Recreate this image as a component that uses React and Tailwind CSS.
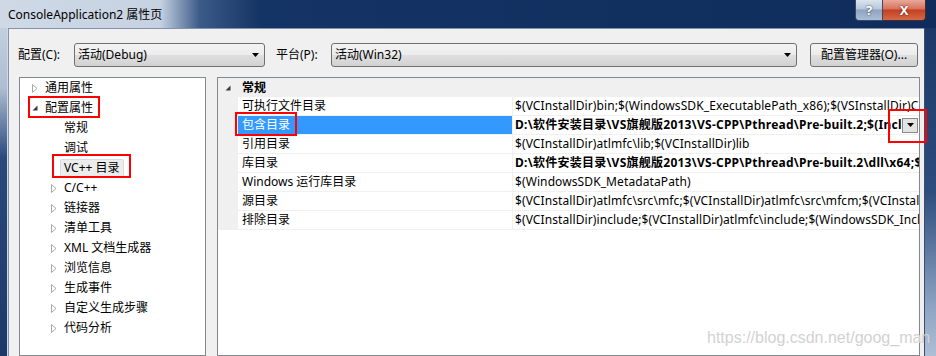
import React from "react";

const tree = [
  { label: "通用属性", level: 0, icon: "closed" },
  { label: "配置属性", level: 0, icon: "open" },
  { label: "常规", level: 1, icon: null },
  { label: "调试", level: 1, icon: null },
  { label: "VC++ 目录", level: 1, icon: null, selected: true },
  { label: "C/C++", level: 1, icon: "closed" },
  { label: "链接器", level: 1, icon: "closed" },
  { label: "清单工具", level: 1, icon: "closed" },
  { label: "XML 文档生成器", level: 1, icon: "closed" },
  { label: "浏览信息", level: 1, icon: "closed" },
  { label: "生成事件", level: 1, icon: "closed" },
  { label: "自定义生成步骤", level: 1, icon: "closed" },
  { label: "代码分析", level: 1, icon: "closed" },
];

const rows = [
  { name: "可执行文件目录", value: "$(VCInstallDir)bin;$(WindowsSDK_ExecutablePath_x86);$(VSInstallDir)Common7\\Tools\\bin;$(VSInstallDir)Common7\\tools" },
  { name: "包含目录", value: "D:\\软件安装目录\\VS旗舰版2013\\VS-CPP\\Pthread\\Pre-built.2;$(IncludePath)", bold: true, selected: true },
  { name: "引用目录", value: "$(VCInstallDir)atlmfc\\lib;$(VCInstallDir)lib" },
  { name: "库目录", value: "D:\\软件安装目录\\VS旗舰版2013\\VS-CPP\\Pthread\\Pre-built.2\\dll\\x64;$(LibraryPath)", bold: true },
  { name: "Windows 运行库目录", value: "$(WindowsSDK_MetadataPath)" },
  { name: "源目录", value: "$(VCInstallDir)atlmfc\\src\\mfc;$(VCInstallDir)atlmfc\\src\\mfcm;$(VCInstallDir)atlmfc\\src\\atl;$(VCInstallDir)crt\\src" },
  { name: "排除目录", value: "$(VCInstallDir)include;$(VCInstallDir)atlmfc\\include;$(WindowsSDK_IncludePath);$(MSBuildToolsPath32)" },
];

function Closed() {
  return (
    <svg width="6" height="9" viewBox="0 0 6 9">
      <path d="M0.5 0.5 L5 4.5 L0.5 8.5 Z" fill="none" stroke="#a8a8a8" strokeWidth="1" />
    </svg>
  );
}

function Open() {
  return (
    <svg width="6" height="6" viewBox="0 0 6 6">
      <path d="M5.5 0.5 L5.5 5.5 L0.5 5.5 Z" fill="#3a3a3a" />
    </svg>
  );
}

function Arrow() {
  return (
    <svg width="7" height="4" viewBox="0 0 7 4">
      <path d="M0 0H7L3.5 4Z" fill="#000" />
    </svg>
  );
}

function Combo({ text, className }) {
  return (
    <div className={"flex h-[24px] items-center justify-between rounded-[3px] border border-[#707070] bg-[linear-gradient(to_bottom,#f3f3f3_0%,#ececec_50%,#dfdfdf_50%,#d2d2d2_100%)] pl-[3px] pr-[5px] " + className}>
      <span className="leading-[16px]">{text}</span>
      <Arrow />
    </div>
  );
}

export default function App() {
  return (
    <div className="relative flex h-[356px] w-[936px] flex-col overflow-hidden bg-[#1b3868] text-[12px] text-black font-['Noto_Sans','Noto_Sans_CJK_SC',sans-serif]">
      {/* title bar */}
      <div className="flex h-[28px] shrink-0 items-start bg-[linear-gradient(to_right,#cfd9e6_0px,#c6d2e2_160px,#3b5a88_200px,#143465_260px,#0f2c5c_100%)]">
        <div className="pl-[8px] pt-[6px] leading-[17px] text-[#000]">ConsoleApplication2 属性页</div>
        <div className="ml-auto mr-[10px] flex h-[21px]">
          <div className="flex w-[28px] items-center justify-center rounded-bl-[4px] border border-t-0 border-[#3a4a63] bg-[linear-gradient(to_bottom,#dbe4ef_0%,#b7c7db_45%,#8ea3bf_50%,#a9bed6_100%)] text-[13px] font-bold leading-none text-white [text-shadow:0_0_2px_#223]">
            ?
          </div>
          <div className="flex w-[43px] items-center justify-center rounded-br-[4px] border border-l-0 border-t-0 border-[#4a2a2a] bg-[linear-gradient(to_bottom,#e9a99a_0%,#d8705b_45%,#c3401f_50%,#d46a48_100%)] text-[13px] font-bold leading-none text-white [text-shadow:0_0_2px_#400]">
            X
          </div>
        </div>
      </div>

      {/* body */}
      <div className="flex min-h-0 flex-1">
        <div className="w-[8px] shrink-0 bg-[linear-gradient(to_bottom,#c3cfde_0px,#aebdd2_60px,#2a4a7c_130px,#1b3868_100%)] border-r border-[#cfd8e4]" />
        <div className="flex min-w-0 flex-1 flex-col border-l border-t border-[#8393ab] bg-[#f0f0f0] pl-[9px] pt-[14px]">
          {/* config row */}
          <div className="flex h-[24px] items-center">
            <div className="w-[56px] leading-[16px]">配置(C):</div>
            <Combo text="活动(Debug)" className="w-[191px]" />
            <div className="ml-[11px] w-[55px] leading-[16px]">平台(P):</div>
            <Combo text="活动(Win32)" className="w-[466px]" />
            <div className="ml-[13px] flex h-[24px] w-[108px] items-center justify-center rounded-[3px] border border-[#707070] bg-[linear-gradient(to_bottom,#f3f3f3_0%,#ececec_50%,#dfdfdf_50%,#d2d2d2_100%)] leading-[16px]">
              配置管理器(O)...
            </div>
          </div>

          {/* panels */}
          <div className="mt-[10px] ml-[1px] flex h-[300px] gap-[11px]">
            {/* tree */}
            <div className="w-[187px] shrink-0 border border-[#828790] bg-white">
              {tree.map((t, i) => (
                <div key={i} className={"flex h-[20px] items-center " + (t.level === 0 ? "pl-[12px]" : "pl-[31px]")}>
                  <div className="flex w-[13px] items-center">
                    {t.icon === "closed" && <Closed />}
                    {t.icon === "open" && <Open />}
                  </div>
                  {t.selected ? (
                    <span className="-ml-[4px] flex h-[19px] items-center rounded-[2px] border border-[#dadada] bg-[#ececec] px-[3px] leading-[16px]">{t.label}</span>
                  ) : (
                    <span className="leading-[16px]">{t.label}</span>
                  )}
                </div>
              ))}
            </div>

            {/* grid */}
            <div className="flex w-[703px] shrink-0 flex-col border border-[#828790] bg-white">
              <div className="flex h-[19px] items-center bg-[#f0f0f0]">
                <div className="flex w-[20px] items-center pl-[7px]">
                  <Open />
                </div>
                <div className="pl-[4px] font-bold leading-[16px]">常规</div>
              </div>
              {rows.map((r, i) => (
                <div key={i} className="flex h-[19px]">
                  <div className="w-[20px] shrink-0 bg-[#f0f0f0]" />
                  <div className={"flex w-[275px] shrink-0 items-center border-b border-r border-[#f0f0f0] pl-[4px] leading-[16px] " + (r.selected ? "bg-[#3399ff] text-white" : "")}>
                    {r.name}
                  </div>
                  <div className="flex min-w-0 flex-1 items-center border-b border-[#f0f0f0] pl-[2px]">
                    <div className={"min-w-0 flex-1 overflow-hidden whitespace-nowrap leading-[16px] " + (r.bold ? "font-bold tracking-[0.25px]" : "tracking-[0.1px]")}>{r.value}</div>
                    {r.selected && (
                      <div className="mr-[1px] flex h-[15px] w-[16px] shrink-0 items-center justify-center border border-[#8a8a8a] bg-[#e3e3e3]">
                        <Arrow />
                      </div>
                    )}
                  </div>
                </div>
              ))}
            </div>
          </div>
        </div>
        <div className="w-[12px] shrink-0 border-l border-[#3a4f70] bg-[linear-gradient(to_bottom,#1b3868_0%,#2d4d7e_50%,#8ea4c2_85%,#aebfd5_100%)]" />
      </div>

      {/* annotation boxes */}
      <div className="pointer-events-none absolute left-[28px] top-[96px] h-[22px] w-[72px] border-[2px] border-[#ff0000]" />
      <div className="pointer-events-none absolute left-[52px] top-[154px] h-[24px] w-[79px] border-[2px] border-[#ff0000]" />
      <div className="pointer-events-none absolute left-[235px] top-[112px] h-[24px] w-[62px] border-[2px] border-[#ff0000]" />
      <div className="pointer-events-none absolute left-[888px] top-[109px] h-[34px] w-[39px] border-[2px] border-[#ff0000]" />

      {/* watermark */}
      <div className="pointer-events-none absolute left-[707px] top-[328px] text-[16px] leading-[20px] text-[#d2d2d2] font-['Liberation_Sans',sans-serif]">
        https://blog.csdn.net/goog_man
      </div>
    </div>
  );
}
